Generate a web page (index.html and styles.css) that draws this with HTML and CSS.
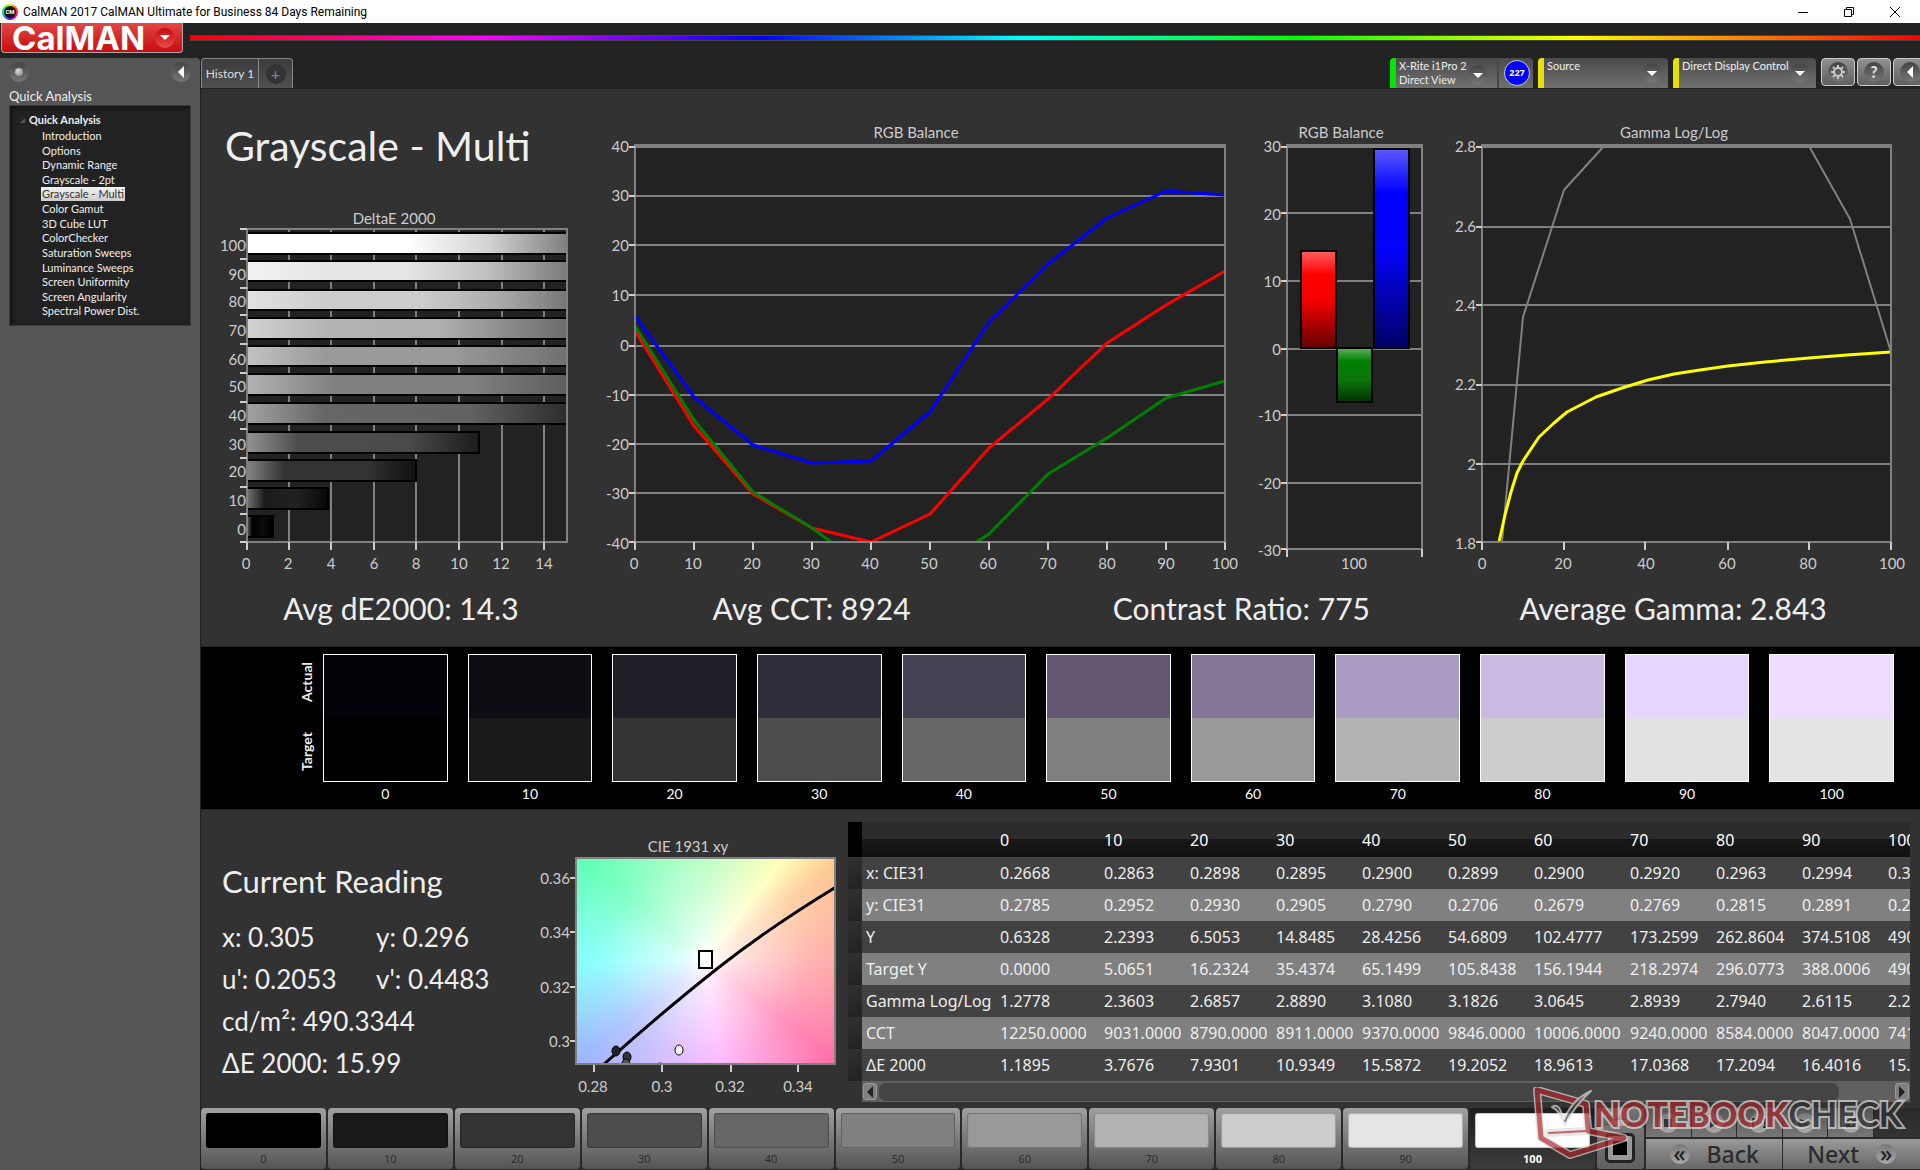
FILE: index.html
```html
<!DOCTYPE html>
<html lang="en">
<head>
<meta charset="utf-8">
<meta name="viewport" content="width=device-width, initial-scale=1">
<title>CalMAN 2017 CalMAN Ultimate for Business 84 Days Remaining</title>
<link rel="stylesheet" href="styles.css">
</head>
<body>
<header class="titlebar">
  <span class="app-icon">CM</span>
  <span class="app-title">CalMAN 2017 CalMAN Ultimate for Business 84 Days Remaining</span>
  <div class="window-buttons">
    <button type="button" aria-label="Minimize"><svg width="12" height="12" viewBox="0 0 12 12"><path d="M1 6.5h10" stroke="#000" fill="none"/></svg></button>
    <button type="button" aria-label="Restore"><svg width="12" height="12" viewBox="0 0 12 12"><path d="M1.500 3.500h7v7h-7zM3.500 3.500v-2h7v7h-2" stroke="#000" fill="none"/></svg></button>
    <button type="button" aria-label="Close"><svg width="12" height="12" viewBox="0 0 12 12"><path d="M1 1l10 10M11 1L1 11" stroke="#000" fill="none"/></svg></button>
  </div>
</header>

<div class="brandbar">
  <button type="button" class="brand">CalMAN<span class="knob knob-red"><i class="tri-down"></i></span></button>
  <div class="spectrum"></div>
</div>

<div class="shell">
  <aside class="sidebar">
    <div class="sidebar-tools">
      <button type="button" class="knob" aria-label="Record"><i class="bead"></i></button>
      <button type="button" class="knob" aria-label="Collapse"><i class="tri-left"></i></button>
    </div>
    <h2>Quick Analysis</h2>
    <nav class="tree">
      <div class="tree-root"><svg width="5" height="5" viewBox="0 0 5 5"><path d="M5 0v5H0z" fill="#555"/></svg>Quick Analysis</div>
      <ul>
        <li><a href="#">Introduction</a></li>
        <li><a href="#">Options</a></li>
        <li><a href="#">Dynamic Range</a></li>
        <li><a href="#">Grayscale - 2pt</a></li>
        <li><a href="#" class="current">Grayscale - Multi</a></li>
        <li><a href="#">Color Gamut</a></li>
        <li><a href="#">3D Cube LUT</a></li>
        <li><a href="#">ColorChecker</a></li>
        <li><a href="#">Saturation Sweeps</a></li>
        <li><a href="#">Luminance Sweeps</a></li>
        <li><a href="#">Screen Uniformity</a></li>
        <li><a href="#">Screen Angularity</a></li>
        <li><a href="#">Spectral Power Dist.</a></li>
      </ul>
    </nav>
  </aside>

  <main class="workspace">
    <div class="toolbar">
      <div class="tabs">
        <button type="button" class="tab">History 1</button>
        <button type="button" class="tab tab-add" aria-label="Add history"><span class="knob">+</span></button>
      </div>
      <div class="devices">
        <div class="device meter">
          <button type="button" class="meter-name"><span>X-Rite i1Pro 2<br>Direct View</span><span class="knob"><i class="tri-down"></i></span></button>
          <button type="button" class="count">227</button>
        </div>
        <div class="device source">
          <select aria-label="Source"><option>Source</option></select>
          <span class="knob"><i class="tri-down"></i></span>
        </div>
        <div class="device display">
          <select aria-label="Display control"><option>Direct Display Control</option></select>
          <span class="knob"><i class="tri-down"></i></span>
        </div>
        <button type="button" class="tool" aria-label="Settings"><span class="knob"><svg width="16" height="16" viewBox="0 0 16 16"><circle cx="8" cy="8" r="4" fill="none" stroke="#ccc" stroke-width="2"/><path d="M8 1v2M8 13v2M1 8h2M13 8h2M3 3l1.500 1.500M11.500 11.500L13 13M3 13l1.500-1.500M11.500 4.500L13 3" stroke="#ccc" stroke-width="2"/></svg></span></button>
        <button type="button" class="tool" aria-label="Help"><span class="knob">?</span></button>
        <button type="button" class="tool" aria-label="Collapse panel"><span class="knob"><i class="tri-left"></i></span></button>
      </div>
    </div>

    <section class="charts">
      <div class="chart-first">
        <h1>Grayscale - Multi</h1>
        <svg class="chart" viewBox="200 200 390 380" role="img" aria-label="DeltaE 2000">
          <defs>
            <linearGradient id="b100"><stop offset="0" stop-color="#fff"/><stop offset=".5" stop-color="#fff"/><stop offset=".75" stop-color="#d4d4d4"/><stop offset="1" stop-color="#808080"/></linearGradient>
            <linearGradient id="b90"><stop offset="0" stop-color="#f2f2f2"/><stop offset=".25" stop-color="#e5e5e5"/><stop offset=".5" stop-color="#e5e5e5"/><stop offset=".75" stop-color="#c0c0c0"/><stop offset="1" stop-color="#7a7a7a"/></linearGradient>
            <linearGradient id="b80"><stop offset="0" stop-color="#e2e2e2"/><stop offset=".25" stop-color="#ccc"/><stop offset=".55" stop-color="#ccc"/><stop offset=".8" stop-color="#a8a8a8"/><stop offset="1" stop-color="#767676"/></linearGradient>
            <linearGradient id="b70"><stop offset="0" stop-color="#d2d2d2"/><stop offset=".25" stop-color="#b3b3b3"/><stop offset=".6" stop-color="#b0b0b0"/><stop offset="1" stop-color="#6c6c6c"/></linearGradient>
            <linearGradient id="b60"><stop offset="0" stop-color="#c2c2c2"/><stop offset=".25" stop-color="#999"/><stop offset=".65" stop-color="#999"/><stop offset="1" stop-color="#707070"/></linearGradient>
            <linearGradient id="b50"><stop offset="0" stop-color="#b2b2b2"/><stop offset=".27" stop-color="#808080"/><stop offset=".7" stop-color="#808080"/><stop offset="1" stop-color="#5e5e5e"/></linearGradient>
            <linearGradient id="b40"><stop offset="0" stop-color="#a2a2a2"/><stop offset=".24" stop-color="#666"/><stop offset=".7" stop-color="#626262"/><stop offset="1" stop-color="#2c2c2c"/></linearGradient>
            <linearGradient id="b30"><stop offset="0" stop-color="#929292"/><stop offset=".22" stop-color="#4d4d4d"/><stop offset=".7" stop-color="#4a4a4a"/><stop offset="1" stop-color="#1c1c1c"/></linearGradient>
            <linearGradient id="b20"><stop offset="0" stop-color="#848484"/><stop offset=".22" stop-color="#333"/><stop offset=".7" stop-color="#333"/><stop offset="1" stop-color="#111"/></linearGradient>
            <linearGradient id="b10"><stop offset="0" stop-color="#747474"/><stop offset=".22" stop-color="#1a1a1a"/><stop offset=".6" stop-color="#222"/><stop offset="1" stop-color="#080808"/></linearGradient>
            <linearGradient id="b0"><stop offset="0" stop-color="#666"/><stop offset=".2" stop-color="#000"/><stop offset=".6" stop-color="#0c0c0c"/><stop offset="1" stop-color="#000"/></linearGradient>
          </defs>
          <rect class="plot" x="247" y="229" width="320" height="313"/>
          <path class="grid" d="M289 229v313M331 229v313M374 229v313M416 229v313M459 229v313M502 229v313M544 229v313"/>
          <g class="bars">
            <rect x="247" y="233" width="320" height="21" fill="url(#b100)"/>
            <rect x="247" y="261" width="320" height="20" fill="url(#b90)"/>
            <rect x="247" y="290" width="320" height="20" fill="url(#b80)"/>
            <rect x="247" y="318" width="320" height="21" fill="url(#b70)"/>
            <rect x="247" y="346" width="320" height="20" fill="url(#b60)"/>
            <rect x="247" y="374" width="320" height="21" fill="url(#b50)"/>
            <rect x="247" y="403" width="320" height="21" fill="url(#b40)"/>
            <rect x="247" y="432" width="232" height="21" fill="url(#b30)"/>
            <rect x="247" y="460" width="169" height="21" fill="url(#b20)"/>
            <rect x="247" y="488" width="81" height="21" fill="url(#b10)"/>
            <rect x="247" y="516" width="26" height="21" fill="url(#b0)"/>
          </g>
          <path class="frame" d="M247 229h320v313H247z"/>
          <path class="ticks" d="M240 229h7M240 259h7M240 288h7M240 315h7M240 344h7M240 373h7M240 402h7M240 429h7M240 458h7M240 487h7M240 514h7M240 542h7M247 542v8M289 542v8M331 542v8M374 542v8M416 542v8M459 542v8M502 542v8M544 542v8"/>
          <g class="mid"><text x="394" y="224">DeltaE 2000</text><text x="246" y="569">0</text><text x="288" y="569">2</text><text x="331" y="569">4</text><text x="374" y="569">6</text><text x="416" y="569">8</text><text x="459" y="569">10</text><text x="501" y="569">12</text><text x="544" y="569">14</text></g>
          <g class="end"><text x="246" y="251">100</text><text x="246" y="280">90</text><text x="246" y="307">80</text><text x="246" y="336">70</text><text x="246" y="365">60</text><text x="246" y="392">50</text><text x="246" y="421">40</text><text x="246" y="450">30</text><text x="246" y="477">20</text><text x="246" y="506">10</text><text x="246" y="535">0</text></g>
        </svg>
      </div>

      <svg class="chart" viewBox="590 120 655 460" role="img" aria-label="RGB Balance over stimulus">
        <rect class="plot" x="635" y="146" width="590" height="396"/>
        <path class="grid" d="M635 196h590M635 245h590M635 295h590M635 346h590M635 395h590M635 444h590M635 493h590"/>
        <path class="grid grid-top" d="M634 146h592"/>
        <clipPath id="c2"><rect x="635" y="145" width="590" height="397"/></clipPath>
        <g class="lines" clip-path="url(#c2)">
          <polyline stroke="#00f" points="635,316 694,397 753,445 812,463 871,461 930,412 989,322 1048,264 1107,218 1166,191 1225,195"/>
          <polyline stroke="#f00" points="635,331 694,426 753,494 812,528 871,542 930,514 989,448 1048,399 1107,343 1166,305 1225,271"/>
          <polyline stroke="#008000" points="635,326 694,420 753,492 812,528 831,542 871,572 930,580 976,542 989,534 1048,474 1107,438 1166,398 1225,381"/>
        </g>
        <path class="frame" d="M635 145h590v397H635z"/>
        <path class="ticks" d="M629 147h6M629 196h6M629 245h6M629 295h6M629 346h6M629 395h6M629 444h6M629 493h6M629 542h6M635 542v8M694 542v8M753 542v8M812 542v8M871 542v8M930 542v8M989 542v8M1048 542v8M1107 542v8M1166 542v8M1225 542v8"/>
        <g class="mid"><text x="916" y="138">RGB Balance</text><text x="634" y="569">0</text><text x="693" y="569">10</text><text x="752" y="569">20</text><text x="811" y="569">30</text><text x="870" y="569">40</text><text x="929" y="569">50</text><text x="988" y="569">60</text><text x="1048" y="569">70</text><text x="1107" y="569">80</text><text x="1166" y="569">90</text><text x="1225" y="569">100</text></g>
        <g class="end"><text x="629" y="152">40</text><text x="629" y="201">30</text><text x="629" y="251">20</text><text x="629" y="301">10</text><text x="629" y="351">0</text><text x="629" y="401">-10</text><text x="629" y="450">-20</text><text x="629" y="499">-30</text><text x="629" y="549">-40</text></g>
      </svg>

      <svg class="chart" viewBox="1245 120 195 460" role="img" aria-label="RGB Balance at 100">
        <defs>
          <linearGradient id="gr" x2="0" y2="1"><stop offset="0" stop-color="#ff6060"/><stop offset=".25" stop-color="#f00"/><stop offset=".5" stop-color="#f80000"/><stop offset="1" stop-color="#640000"/></linearGradient>
          <linearGradient id="gg" x2="0" y2="1"><stop offset="0" stop-color="#60b060"/><stop offset=".25" stop-color="#008000"/><stop offset=".6" stop-color="#0c740c"/><stop offset="1" stop-color="#003000"/></linearGradient>
          <linearGradient id="gb" x2="0" y2="1"><stop offset="0" stop-color="#5a5aff"/><stop offset=".22" stop-color="#00f"/><stop offset=".5" stop-color="#0404fa"/><stop offset="1" stop-color="#000064"/></linearGradient>
        </defs>
        <rect class="plot" x="1287" y="146" width="135" height="403"/>
        <path class="grid" d="M1287 213h135M1287 281h135M1287 349h135M1287 415h135M1287 483h135"/>
        <path class="grid grid-top" d="M1286 146h137"/>
        <path class="frame" d="M1287 145h135v404h-135z"/>
        <g class="bars">
          <rect x="1301" y="251" width="35" height="97" fill="url(#gr)"/>
          <rect x="1337" y="348" width="35" height="54" fill="url(#gg)"/>
          <rect x="1374" y="149" width="35" height="199" fill="url(#gb)"/>
        </g>
        <path class="ticks" d="M1281 147h6M1281 213h6M1281 281h6M1281 349h6M1281 415h6M1281 483h6M1281 549h6M1287 549v8M1422 549v8"/>
        <g class="mid"><text x="1341" y="138">RGB Balance</text><text x="1354" y="569">100</text></g>
        <g class="end"><text x="1281" y="152">30</text><text x="1281" y="220">20</text><text x="1281" y="287">10</text><text x="1281" y="355">0</text><text x="1281" y="421">-10</text><text x="1281" y="489">-20</text><text x="1281" y="556">-30</text></g>
      </svg>

      <svg class="chart" viewBox="1440 120 480 460" role="img" aria-label="Gamma Log/Log">
        <rect class="plot" x="1482" y="146" width="409" height="396"/>
        <path class="grid" d="M1482 227h409M1482 305h409M1482 385h409M1482 464h409"/>
        <path class="grid grid-top" d="M1481 146h411"/>
        <g class="lines">
          <polyline class="thin" stroke="#808080" points="1502,542 1523,317 1564,190 1604,146 1809,146 1850,219 1891,352"/>
          <polyline stroke="#ff0" points="1499,542 1505,515 1511,492 1517,473 1523,461 1539,437 1554,423 1567,412 1596,397 1622,388 1648,380 1674,374 1700,370 1728,366 1765,362 1809,358 1847,355 1891,352"/>
        </g>
        <path class="frame" d="M1482 145h409v397h-409z"/>
        <path class="ticks" d="M1476 147h6M1476 227h6M1476 305h6M1476 385h6M1476 464h6M1476 542h6M1482 542v8M1564 542v8M1645 542v8M1728 542v8M1809 542v8M1891 542v8"/>
        <g class="mid"><text x="1674" y="138">Gamma Log/Log</text><text x="1482" y="569">0</text><text x="1563" y="569">20</text><text x="1646" y="569">40</text><text x="1727" y="569">60</text><text x="1808" y="569">80</text><text x="1892" y="569">100</text></g>
        <g class="end"><text x="1476" y="152">2.8</text><text x="1476" y="232">2.6</text><text x="1476" y="311">2.4</text><text x="1476" y="390">2.2</text><text x="1476" y="470">2</text><text x="1476" y="549">1.8</text></g>
      </svg>
    </section>

    <section class="stats">
      <p>Avg dE2000: 14.3</p>
      <p>Avg CCT: 8924</p>
      <p>Contrast Ratio: 775</p>
      <p>Average Gamma: 2.843</p>
    </section>

    <section class="swatches">
      <div class="swatch-side"><span>Actual</span><span>Target</span></div>
      <figure class="s0"><div></div><figcaption>0</figcaption></figure>
      <figure class="s10"><div></div><figcaption>10</figcaption></figure>
      <figure class="s20"><div></div><figcaption>20</figcaption></figure>
      <figure class="s30"><div></div><figcaption>30</figcaption></figure>
      <figure class="s40"><div></div><figcaption>40</figcaption></figure>
      <figure class="s50"><div></div><figcaption>50</figcaption></figure>
      <figure class="s60"><div></div><figcaption>60</figcaption></figure>
      <figure class="s70"><div></div><figcaption>70</figcaption></figure>
      <figure class="s80"><div></div><figcaption>80</figcaption></figure>
      <figure class="s90"><div></div><figcaption>90</figcaption></figure>
      <figure class="s100"><div></div><figcaption>100</figcaption></figure>
    </section>

    <section class="lower">
      <div class="reading">
        <h2>Current Reading</h2>
        <div class="values">
          <span>x: 0.305</span><span>y: 0.296</span>
          <span>u': 0.2053</span><span>v': 0.4483</span>
          <span class="wide">cd/m²: 490.3344</span>
          <span class="wide">ΔE 2000: 15.99</span>
        </div>
      </div>

      <svg class="chart" viewBox="538 830 300 270" role="img" aria-label="CIE 1931 xy">
        <foreignObject x="576" y="856" width="260" height="207"><div class="gamut"></div></foreignObject>
        <clipPath id="c5"><rect x="576" y="856" width="260" height="208"/></clipPath>
        <g clip-path="url(#c5)">
          <path class="locus" d="M603 1064C640 1031 680 997 718 967S795 911 836 886"/>
          <ellipse cx="616" cy="1050" rx="4" ry="5" fill="#222" stroke="#000"/>
          <ellipse cx="627" cy="1056" rx="4" ry="5" fill="#333" stroke="#000"/>
          <ellipse cx="626" cy="1063" rx="4" ry="5" fill="#555" stroke="#000"/>
          <ellipse cx="660" cy="1067" rx="4" ry="5" fill="#555" stroke="#000"/>
          <ellipse cx="679" cy="1049" rx="4" ry="5" fill="#fff" stroke="#000"/>
        </g>
        <rect x="699" y="950" width="13" height="17" fill="none" stroke="#000" stroke-width="2"/>
        <path class="frame" d="M576 857h259v206H576z"/>
        <path class="ticks" d="M570 877h5M570 931h5M570 986h5M570 1040h5M594 1064v7M662 1064v7M731 1064v7M798 1064v7"/>
        <g class="mid"><text x="688" y="851">CIE 1931 xy</text><text x="593" y="1091">0.28</text><text x="662" y="1091">0.3</text><text x="730" y="1091">0.32</text><text x="798" y="1091">0.34</text></g>
        <g class="end"><text x="570" y="883">0.36</text><text x="570" y="937">0.34</text><text x="570" y="992">0.32</text><text x="570" y="1046">0.3</text></g>
      </svg>

      <div class="data">
        <div class="data-scroll">
        <table>
          <colgroup><col class="c-grip"><col class="c-label"><col class="c-wide"><col class="c-num"><col class="c-num"><col class="c-num"><col class="c-num"><col class="c-num"><col class="c-mid"><col class="c-num"><col class="c-num"><col class="c-num"><col class="c-num"></colgroup>
          <thead><tr><th class="grip"></th><th></th><th>0</th><th>10</th><th>20</th><th>30</th><th>40</th><th>50</th><th>60</th><th>70</th><th>80</th><th>90</th><th>100</th></tr></thead>
          <tbody>
            <tr><td class="grip"></td><th>x: CIE31</th><td>0.2668</td><td>0.2863</td><td>0.2898</td><td>0.2895</td><td>0.2900</td><td>0.2899</td><td>0.2900</td><td>0.2920</td><td>0.2963</td><td>0.2994</td><td>0.3050</td></tr>
            <tr><td class="grip"></td><th>y: CIE31</th><td>0.2785</td><td>0.2952</td><td>0.2930</td><td>0.2905</td><td>0.2790</td><td>0.2706</td><td>0.2679</td><td>0.2769</td><td>0.2815</td><td>0.2891</td><td>0.2960</td></tr>
            <tr><td class="grip"></td><th>Y</th><td>0.6328</td><td>2.2393</td><td>6.5053</td><td>14.8485</td><td>28.4256</td><td>54.6809</td><td>102.4777</td><td>173.2599</td><td>262.8604</td><td>374.5108</td><td>490.3344</td></tr>
            <tr><td class="grip"></td><th>Target Y</th><td>0.0000</td><td>5.0651</td><td>16.2324</td><td>35.4374</td><td>65.1499</td><td>105.8438</td><td>156.1944</td><td>218.2974</td><td>296.0773</td><td>388.0006</td><td>490.3344</td></tr>
            <tr><td class="grip"></td><th>Gamma Log/Log</th><td>1.2778</td><td>2.3603</td><td>2.6857</td><td>2.8890</td><td>3.1080</td><td>3.1826</td><td>3.0645</td><td>2.8939</td><td>2.7940</td><td>2.6115</td><td>2.2700</td></tr>
            <tr><td class="grip"></td><th>CCT</th><td>12250.0000</td><td>9031.0000</td><td>8790.0000</td><td>8911.0000</td><td>9370.0000</td><td>9846.0000</td><td>10006.0000</td><td>9240.0000</td><td>8584.0000</td><td>8047.0000</td><td>7410.0000</td></tr>
            <tr><td class="grip"></td><th>ΔE 2000</th><td>1.1895</td><td>3.7676</td><td>7.9301</td><td>10.9349</td><td>15.5872</td><td>19.2052</td><td>18.9613</td><td>17.0368</td><td>17.2094</td><td>16.4016</td><td>15.9900</td></tr>
          </tbody>
        </table>
        </div>
        <div class="scrollbar">
          <button type="button" aria-label="Scroll left"><svg width="6" height="12" viewBox="0 0 6 12"><path d="M6 0v12L0 6z" fill="#222"/></svg></button>
          <div class="thumb"></div>
          <button type="button" aria-label="Scroll right"><svg width="6" height="12" viewBox="0 0 6 12"><path d="M0 0v12l6-6z" fill="#222"/></svg></button>
        </div>
      </div>
    </section>

    <footer class="patterns">
      <button type="button" class="pattern p0"><i></i>0</button>
      <button type="button" class="pattern p10"><i></i>10</button>
      <button type="button" class="pattern p20"><i></i>20</button>
      <button type="button" class="pattern p30"><i></i>30</button>
      <button type="button" class="pattern p40"><i></i>40</button>
      <button type="button" class="pattern p50"><i></i>50</button>
      <button type="button" class="pattern p60"><i></i>60</button>
      <button type="button" class="pattern p70"><i></i>70</button>
      <button type="button" class="pattern p80"><i></i>80</button>
      <button type="button" class="pattern p90"><i></i>90</button>
      <button type="button" class="pattern p100 active"><i></i>100</button>
      <div class="stopper">
        <button type="button" class="stop-up" aria-label="Expand"><span class="knob"><svg width="10" height="6" viewBox="0 0 10 6"><path d="M5 0l5 6H0z" fill="#444"/></svg></span></button>
        <button type="button" class="stop-main" aria-label="Pattern window"><span class="stop-box"><i></i></span></button>
      </div>
      <div class="transport">
        <div class="media">
          <button type="button" aria-label="Stop"><span class="knob"><svg width="8" height="8" viewBox="0 0 8 8"><path d="M0 0h8v8H0z" fill="#333"/></svg></span></button>
          <button type="button" aria-label="Play"><span class="knob"><svg width="8" height="10" viewBox="0 0 8 10"><path d="M0 0l8 5-8 5z" fill="#333"/></svg></span></button>
          <button type="button" aria-label="Read series"><span class="knob"><svg width="14" height="10" viewBox="0 0 14 10"><path d="M3 1H1v8h2M11 1h2v8h-2M5 5h1M8 5h1" stroke="#333" stroke-width="2" fill="none"/></svg></span></button>
          <button type="button" aria-label="Read continuous"><span class="knob"><svg width="14" height="8" viewBox="0 0 14 8"><path d="M7 4C5 1 1 0 1 4s4 3 6 0 6-3 6 0-4 3-6 0z" stroke="#333" stroke-width="2" fill="none"/></svg></span></button>
          <button type="button" aria-label="Refresh"><span class="knob"><svg width="12" height="12" viewBox="0 0 12 12"><path d="M2 6a4 4 0 0 1 7-2.500M10 6a4 4 0 0 1-7 2.500M10 1v3H7M2 11V8h3" stroke="#333" stroke-width="2" fill="none"/></svg></span></button>
          <span class="media-blank"></span>
        </div>
        <div class="steps">
          <button type="button"><span class="knob">«</span>Back</button>
          <button type="button">Next<span class="knob">»</span></button>
        </div>
      </div>
      <svg class="watermark" width="380" height="76" viewBox="0 0 380 76" aria-label="Notebookcheck">
        <g fill="none" stroke-linejoin="round" stroke-linecap="round">
          <path d="M55 42L53 17 4 3l4 48 29 17 54-17-36-7M16 46l37-2" stroke="#ddd" stroke-width="8"/>
          <path d="M55 42L53 17 4 3l4 48 29 17 54-17-36-7" stroke="#a8282c" stroke-width="5"/>
          <path d="M16 46l37-2" stroke="#a8282c" stroke-width="2"/>
          <path d="M19 20q6-4 9 5l3 7Q40 12 58 4 42 18 32 38 27 24 19 20z" fill="#444" stroke="#ddd" stroke-width="2"/>
        </g>
        <text class="wm-text" x="61" y="40"><tspan class="wm-a">NOTEBOOK</tspan><tspan class="wm-b">CHECK</tspan></text>
      </svg>
    </footer>
  </main>
</div>
</body>
</html>
```
FILE: styles.css
```css
* { box-sizing: border-box; }
html { background: #232323; }
body {
  margin: 0;
  min-height: 100vh;
  display: flex;
  flex-direction: column;
  background: #232323;
  color: #eee;
  font-family: Lato, "Noto Sans", sans-serif;
  font-size: 15px;
  overflow-x: hidden;
}
button, select { font: inherit; color: inherit; border: 0; margin: 0; padding: 0; background: none; }
h1, h2, p, figure, ul { margin: 0; padding: 0; font-weight: 400; }
svg { display: block; }

/* Window title bar */
.titlebar { display: flex; align-items: center; height: 23px; padding-left: 2px; background: #fff; color: #000; font: 12px/22px Roboto, "Noto Sans", sans-serif; }
.app-icon { width: 16px; height: 16px; margin-right: 5px; border-radius: 50%; border: 2px solid transparent; background: linear-gradient(#111, #111) padding-box, conic-gradient(#fe0, #f40, #f0a, #60f, #0af, #0f6, #fe0) border-box; color: #fff; font-size: 6px; font-weight: 700; line-height: 12px; text-align: center; }
.window-buttons { margin-left: auto; display: flex; padding-right: 2px; }
.window-buttons button { width: 46px; height: 22px; display: flex; align-items: center; justify-content: center; }

/* Brand strip */
.brandbar { display: flex; height: 35px; gap: 7px; padding-left: 1px; }
.brand { display: flex; align-items: center; justify-content: space-between; width: 182px; height: 30px; padding: 0 7px 0 10px; background: linear-gradient(#e34646, #c80c0c); border: 1px solid #aaa; border-top: 0; border-radius: 0 0 4px 4px; color: #fff; font: 700 33px/28px Inter, sans-serif; }
.spectrum { flex: 1; height: 6px; margin-top: 12px; border: 1px solid #444; border-width: 1px 0; background: linear-gradient(90deg, #f00, #f0f 17%, #00f 33%, #0ff 48%, #0f0 64%, #ff0 80%, #f00); }

.knob { display: inline-flex; align-items: center; justify-content: center; flex: none; width: 20px; height: 20px; border-radius: 50%; background: linear-gradient(#444, #777); color: #ddd; }
.knob-red { background: linear-gradient(#c40c0c, #e84c4c); }
.tri-down { border: 5px solid transparent; border-top-color: #fff; border-bottom: 0; }
.tri-left { border: 6px solid transparent; border-right-color: #fff; border-left: 0; }
.bead { width: 8px; height: 8px; border-radius: 50%; background: radial-gradient(circle at 35% 35%, #ddd, #777); }

.shell { flex: 1; display: grid; grid-template-columns: 200px minmax(0, 1fr); }

/* Sidebar */
.sidebar { background: #555; padding: 4px 9px; border-radius: 0 4px 0 0; font-size: 11px; line-height: 14px; }
.sidebar-tools { display: flex; justify-content: space-between; height: 24px; }
.sidebar h2 { font-size: 13px; line-height: 20px; }
.tree { height: 221px; margin-top: -1px; padding: 5px 0 0 10px; background: #222; border: 1px solid #3a3a3a; box-shadow: inset 2px 2px 5px #111; }
.tree-root { display: flex; align-items: center; gap: 4px; font-weight: 700; line-height: 18px; }
.tree ul { display: grid; grid-auto-rows: 1fr; height: 190px; padding-left: 21px; list-style: none; }
.tree a { display: inline-block; padding: 0 1px; color: #eee; text-decoration: none; white-space: nowrap; }
.tree a.current { background: linear-gradient(#f2f2f2, #ccc); color: #333; }

/* Toolbar */
.workspace { background: #323232; border-left: 1px solid #222; display: flex; flex-direction: column; position: relative; min-width: 0; }
.toolbar { display: flex; justify-content: space-between; height: 30px; background: #232323; overflow: hidden; font-size: 11px; line-height: 14px; }
.tabs, .devices { display: flex; }
.tab { width: 58px; border: 1px solid #888; border-bottom: 0; border-radius: 4px 0 0 0; background: linear-gradient(#3c3c3c, #505050); font-size: 12px; color: #ddd; }
.tab-add { width: 34px; border-left: 0; border-radius: 0 4px 0 0; }
.tab-add .knob { background: #333; color: #888; font-size: 16px; }
.devices { gap: 5px; }
.device { position: relative; display: flex; border-radius: 4px 4px 0 0; border-left: 6px solid #e8e000; background: linear-gradient(#4a4a4a, #707070); }
.meter { width: 143px; border-left-color: #00e800; }
.meter-name { display: flex; flex: 1; justify-content: space-between; padding: 1px 9px 0 3px; text-align: left; white-space: nowrap; border-right: 2px solid #484848; }
.meter-name .knob { margin-top: 6px; }
.count { width: 26px; height: 26px; margin: 2px 3px 0 5px; border-radius: 50%; background: #00f; border: 1px solid #ccc; color: #fff; font: 700 9px/24px "Open Sans", sans-serif; }
.device select { appearance: none; width: 100%; padding: 0 24px 14px 3px; }
.device > .knob { position: absolute; right: 6px; top: 5px; pointer-events: none; }
.source { width: 130px; }
.display { width: 143px; }
.tool { width: 34px; height: 28px; margin-right: -3px; border: 1px solid #ccc; border-radius: 4px; background: linear-gradient(#909090, #606060); }
.tool .knob { font-size: 16px; font-weight: 900; }
.tool:last-child { margin-right: -7px; }

/* Charts */
.charts { display: grid; grid-template-columns: minmax(0, 390fr) minmax(0, 655fr) minmax(0, 195fr) minmax(0, 480fr); align-items: end; border-top: 1px solid #222; margin-left: -1px; }
.charts h1 { padding: 32px 0 29px 25px; font-size: 41px; line-height: 50px; white-space: nowrap; }
.chart { width: 100%; height: auto; font-size: 15px; }
.chart text { fill: #ccc; }
.plot { fill: #222; }
.grid, .frame, .ticks { fill: none; stroke: #808080; stroke-width: 2; shape-rendering: crispEdges; }
.grid-top { stroke-width: 4; }
.ticks { stroke: #ccc; }
.bars rect { stroke: #000; stroke-width: 2; }
.lines { fill: none; stroke-width: 3; stroke-linejoin: round; }
.thin { stroke-width: 2; }
.mid { text-anchor: middle; }
.end { text-anchor: end; }
.locus { fill: none; stroke: #000; stroke-width: 3; }
.gamut {
  height: 100%;
  background:
    radial-gradient(circle at 50% 49%, #fff, rgba(255, 255, 255, 0.750) 20%, rgba(255, 255, 255, 0.400) 60%, rgba(255, 255, 255, 0.200) 100%),
    conic-gradient(from 0deg at 50% 49%, #90ffa0, #ffff98 38deg, #ffb870 54deg, #ff8880 90deg, #ff4890 129deg, #ff90ff 172deg, #80a0ff 231deg, #50ffff 268deg, #30ffa0 309deg, #90ffa0);
}

.stats { display: grid; grid-template-columns: 400fr 422fr 438fr 426fr; padding: 0 34px 10px 0; font-size: 30px; line-height: 56px; text-align: center; white-space: nowrap; }

/* Swatches */
.swatches { display: grid; grid-template-columns: 18px repeat(11, minmax(0, 1fr)); column-gap: 20px; padding: 7px 26px 7px 84px; background: #000; border: 1px solid #222; border-width: 1px 0; }
.swatch-side { display: grid; grid-template-rows: 1fr 1fr; justify-items: end; height: 140px; margin: -7px -13px 0 0; }
.swatch-side span { writing-mode: vertical-rl; transform: rotate(180deg); text-align: center; font: 700 14px/18px Lato, sans-serif; }
.swatches figure div { height: 128px; border: 1px solid #fff; background: linear-gradient(var(--a) 50%, var(--t) 50%); }
.swatches figcaption { padding-top: 3px; font-size: 14px; line-height: 17px; text-align: center; color: #fff; }
.swatches .s0 { --a: #020308; --t: #000; }
.swatches .s10 { --a: #0c0e13; --t: #1a1a1a; }
.swatches .s20 { --a: #201e26; --t: #333; }
.swatches .s30 { --a: #2f2f3b; --t: #4d4d4d; }
.swatches .s40 { --a: #454152; --t: #666; }
.swatches .s50 { --a: #625672; --t: #808080; }
.swatches .s60 { --a: #857596; --t: #999; }
.swatches .s70 { --a: #a99bc2; --t: #b3b3b3; }
.swatches .s80 { --a: #cab9e0; --t: #ccc; }
.swatches .s90 { --a: #e6d6fe; --t: #e2e2e2; }
.swatches .s100 { --a: #eedcfe; --t: #e4e4e4; }

/* Reading, CIE and data */
.lower { flex: 1; display: grid; grid-template-columns: minmax(0, 337fr) minmax(0, 300fr) minmax(0, 1072fr); padding-right: 10px; align-items: start; }
.reading { padding: 46px 0 0 21px; white-space: nowrap; }
.reading h2 { font-size: 31px; line-height: 50px; }
.values { display: grid; grid-template-columns: 154px 1fr; padding-top: 10px; font-size: 26px; line-height: 42px; }
.wide { grid-column: span 2; }
.lower > .chart { margin-top: 21px; }
.data { padding: 12px 0 0 10px; }
.data-scroll { overflow: hidden; }
table { table-layout: fixed; width: 1122px; border-collapse: collapse; font: 16px "Noto Sans", sans-serif; }
.c-grip { width: 14px; }
.c-label { width: 134px; }
.c-wide { width: 104px; }
.c-mid { width: 96px; }
.c-num { width: 86px; }
th, td { height: 32px; padding: 0 0 0 4px; font-weight: 400; text-align: left; white-space: nowrap; line-height: 26px; }
thead th { height: 35px; background: linear-gradient(#2c2c2c 50%, #181818 50%, #111); color: #fff; }
tbody tr { background: #424242; }
tbody tr:nth-child(even) { background: #808080; }
thead .grip { background: #000; }
tbody .grip { background: linear-gradient(#303030, #222); }
.scrollbar { display: flex; align-items: center; height: 21px; margin-left: 14px; padding: 0 1px; gap: 2px; background: #606060; }
.scrollbar button { width: 14px; height: 17px; display: flex; align-items: center; justify-content: center; background: #808080; border: 1px solid #999; border-radius: 3px; }
.thumb { flex: 1; height: 18px; margin-right: 54px; border-radius: 7px; background: #444; }

/* Pattern bar */
.patterns { display: flex; position: relative; gap: 2px; height: 62px; padding-bottom: 1px; background: #2a2a2a; }
.pattern { flex: 1; display: flex; flex-direction: column; align-items: center; padding: 5px 5px 0; border-radius: 4px; background: linear-gradient(#a0a0a0, #555); color: #2a2a2a; font: 11px/21px "Open Sans", sans-serif; }
.pattern i { display: block; width: 100%; height: 36px; border-radius: 3px; background: var(--p); box-shadow: inset 0 0 1px 1px rgba(0, 0, 0, 0.250); }
.pattern.active { background: linear-gradient(#1c1c1c, #3c3c3c); color: #fff; font-weight: 700; }
.p0 { --p: #000; }
.p10 { --p: #1a1a1a; }
.p20 { --p: #333; }
.p30 { --p: #4d4d4d; }
.p40 { --p: #666; }
.p50 { --p: #808080; }
.p60 { --p: #999; }
.p70 { --p: #b3b3b3; }
.p80 { --p: #ccc; }
.p90 { --p: #e5e5e5; }
.p100 { --p: #fff; }
.stopper { display: grid; grid-template-rows: 18px 1fr; width: 47px; }
.stopper button { background: linear-gradient(#777, #606060); display: flex; align-items: center; justify-content: center; border-radius: 3px; }
.stopper .knob, .transport .knob { background: linear-gradient(#777, #aaa); }
.stop-box { display: flex; align-items: center; justify-content: center; width: 30px; height: 30px; border: 3px solid #222; border-radius: 5px; background: #999; }
.stop-box i { width: 14px; height: 14px; background: #000; }
.transport { display: grid; grid-template-rows: 29px 1fr; gap: 2px; width: 274px; }
.media { display: grid; grid-template-columns: repeat(5, 1fr) 46px; gap: 1px; }
.media button, .steps button { display: flex; align-items: center; justify-content: center; background: linear-gradient(#555, #777); }
.media-blank { background: linear-gradient(#2a2a2a, #333); }
.steps { display: grid; grid-template-columns: 1fr 1fr; gap: 1px; }
.steps button { gap: 17px; background: linear-gradient(#9a9a9a, #666); color: #2c2c2c; font: 500 23px/28px "Noto Sans", sans-serif; }
.steps .knob { color: #222; padding-bottom: 3px; }
.watermark { position: absolute; right: 7px; bottom: 7px; opacity: 0.700; pointer-events: none; }
.wm-text { font: 900 34px Lato, sans-serif; paint-order: stroke; stroke: #ddd; stroke-width: 4px; }
.wm-a { fill: #a8282c; }
.wm-b { fill: #333; font-weight: 700; }
```
